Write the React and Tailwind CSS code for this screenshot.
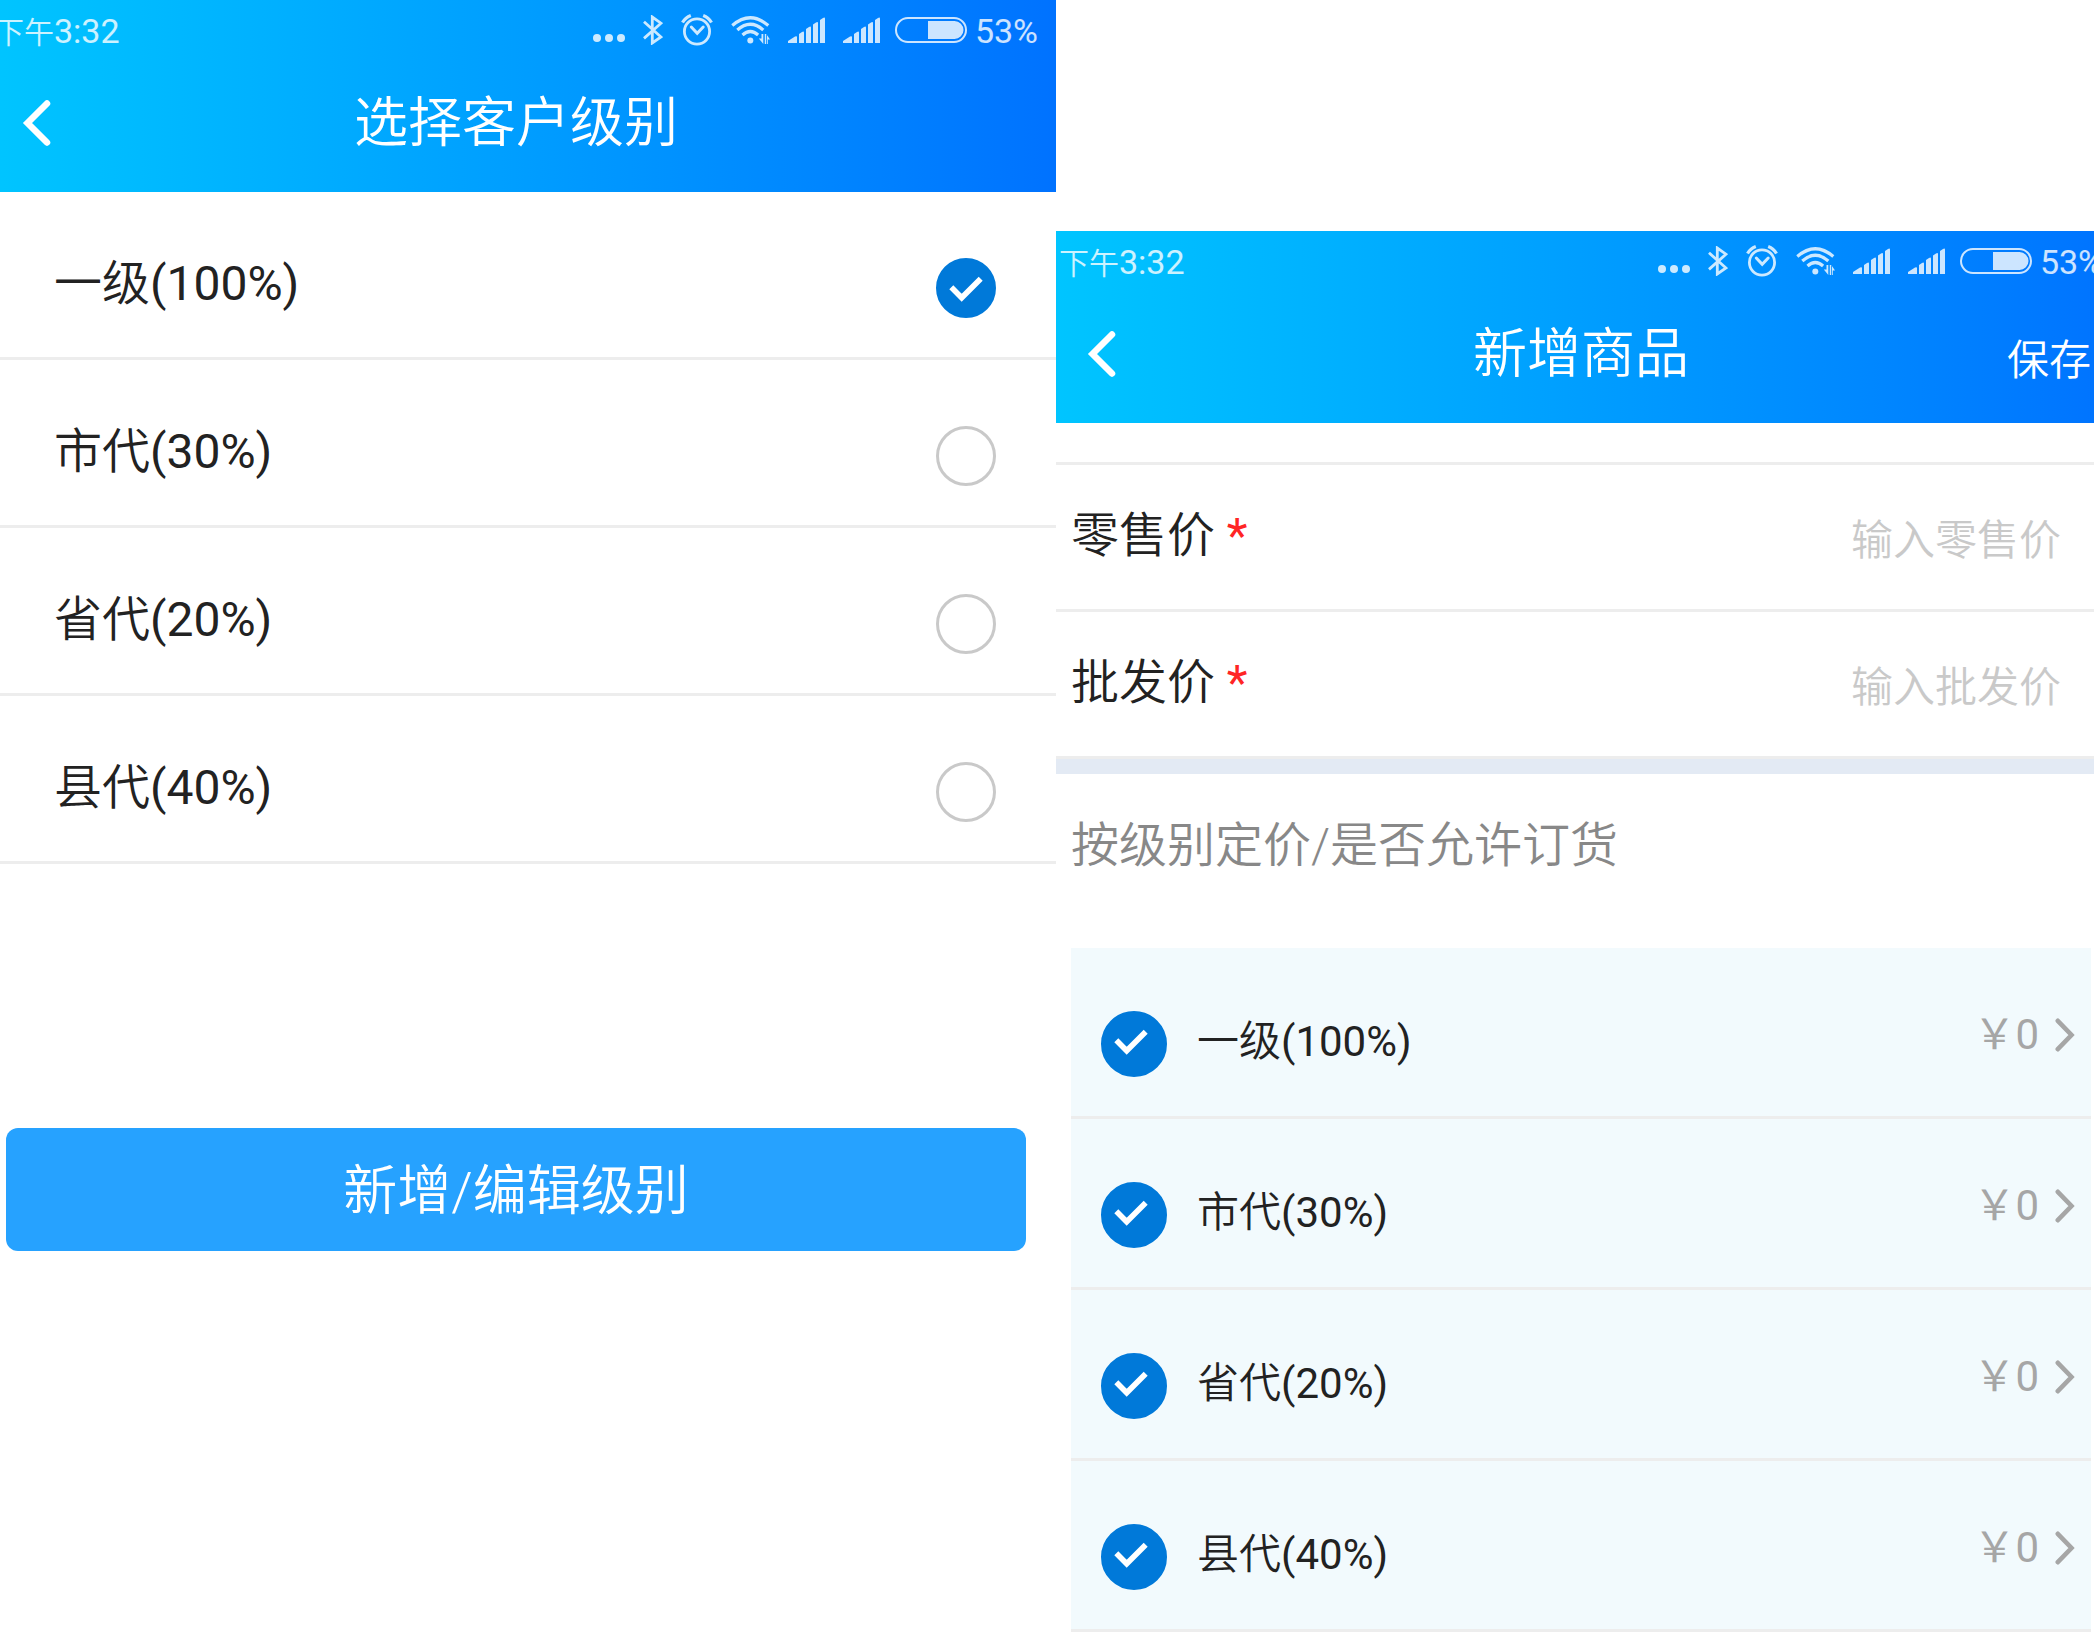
import { useState } from 'react'

const LEVELS = [
  { id: 'l1', name: '一级', rate: 100 },
  { id: 'city', name: '市代', rate: 30 },
  { id: 'province', name: '省代', rate: 20 },
  { id: 'county', name: '县代', rate: 40 },
]

const PRICE_FIELDS = [
  { id: 'retail', label: '零售价', placeholder: '输入零售价' },
  { id: 'wholesale', label: '批发价', placeholder: '输入批发价' },
]

function SignalIcon() {
  return (
    <svg width="37" height="26" viewBox="0 0 37 26" fill="currentColor">
      <path d="M0 26v-2l7-4.500q2-.8 2 .5v6z" />
      <path d="M11 26V17l3-2q2-1 2 .5V26z" />
      <path d="M18 26V12l3-2q2-1 2 .5V26z" />
      <path d="M25 26V7.500l3-2q2-1 2 .5V26z" />
      <path d="M32 26V3l3-2q2-1 2 .5V26z" />
    </svg>
  )
}

function StatusBar() {
  return (
    <div className="flex h-15 items-center gap-[18px] px-[18px] text-[34px] leading-none font-normal text-white/80">
      <span className="mr-auto pt-px">
        <span className="text-[30px] font-[350]">下午</span>3:32
      </span>
      <svg className="mt-4" width="32" height="10" viewBox="0 0 32 10" fill="currentColor">
        <circle cx="4" cy="5" r="4" />
        <circle cx="16" cy="5" r="4" />
        <circle cx="28" cy="5" r="4" />
      </svg>
      <svg width="20" height="30" viewBox="0 0 20 30" fill="none" stroke="currentColor" strokeWidth="2.8">
        <path d="M1 6.800 18 22 9.300 28V2L18 8.200 1 23.400" />
      </svg>
      <svg width="32" height="32" viewBox="0 0 32 32" fill="none" stroke="currentColor" strokeWidth="2.8">
        <circle cx="16" cy="17.500" r="12.600" />
        <path d="M10.300 13 16.200 19.300 22.200 13" strokeLinecap="round" strokeWidth="3" />
        <path d="M1.500 8.500Q4.500 3.500 9.800 1.500M30.500 8.500Q27.500 3.500 22.200 1.500" strokeWidth="3.2" />
      </svg>
      <svg width="39" height="28" viewBox="0 0 39 28" fill="none" stroke="currentColor" strokeWidth="3.2">
        <path d="M1.300 9.500Q19.300-6 37.300 9.500" />
        <path d="M6.300 14Q19.300 2.500 32.300 14" />
        <path d="M11.500 19Q19.300 12 27.100 19" />
        <circle cx="19.300" cy="24.500" r="3" fill="currentColor" stroke="none" />
        <path d="M30.500 18h1.800v10l-4.500-5.500h2.700zM33.800 28V18h1.500l3.700 5.500h-2.200V28h-1V18.500h-.8V28z" fill="currentColor" stroke="none" />
      </svg>
      <SignalIcon />
      <SignalIcon />
      <div className="-ml-[3px] flex items-center gap-2">
        <svg width="72" height="26" viewBox="0 0 72 26">
          <rect x="1" y="1" width="70" height="24" rx="12" fill="none" stroke="currentColor" strokeWidth="2" />
          <path d="M33 4h26.500a9 9 0 0 1 0 18H33z" fill="currentColor" />
        </svg>
        <span className="pt-px">53%</span>
      </div>
    </div>
  )
}

function Header({ title, action }) {
  return (
    <header className="h-48 bg-linear-to-r from-[#00c6ff] to-[#0072ff] text-white">
      <StatusBar />
      <div className="grid h-[123px] grid-cols-[1fr_auto_1fr] items-center px-[30px]">
        <button type="button" aria-label="返回" className="justify-self-start px-4 pt-0.5">
          <svg width="30" height="48" viewBox="0 0 30 48" fill="none" stroke="currentColor" strokeWidth="6.500" strokeLinecap="round">
            <path d="M25 4.500 5.500 24 25 43.500" />
          </svg>
        </button>
        <h1 className="pt-1 text-[54px] leading-none">{title}</h1>
        {action && (
          <button type="button" className="justify-self-end pt-4 text-[42px] leading-none">
            {action}
          </button>
        )}
      </div>
    </header>
  )
}

// the tick keeps one size whatever the size of the circle behind it
function Tick() {
  return (
    <svg
      className="pointer-events-none col-start-1 row-start-1 hidden text-white peer-checked:block"
      width="60"
      height="60"
      viewBox="0 0 60 60"
      fill="none"
      stroke="currentColor"
      strokeWidth="5.600"
    >
      <path d="M15.300 29.300 25.700 39.800 44.700 20.700" />
    </svg>
  )
}

function LevelName({ level }) {
  return (
    <>
      {level.name}
      <span className="font-normal">({level.rate}%)</span>
    </>
  )
}

function LevelPicker() {
  const [selected, setSelected] = useState('l1')

  return (
    <main>
      {LEVELS.map(level => (
        <label
          key={level.id}
          className="flex h-[168px] items-center justify-between border-b-3 border-[#ededed] pt-[27px] pr-[60px] pl-[78px]"
        >
          <span className="pb-2 text-[48px] leading-none">
            <LevelName level={level} />
          </span>
          <span className="grid">
            <input
              type="radio"
              name="level"
              checked={selected === level.id}
              onChange={() => setSelected(level.id)}
              className="peer col-start-1 row-start-1 size-15 appearance-none rounded-full border-3 border-[#c9c9c9] checked:border-[#0079d9] checked:bg-[#0079d9]"
            />
            <Tick />
          </span>
        </label>
      ))}
      <div className="px-[30px] pt-[264px]">
        <button type="button" className="h-[123px] w-full rounded-xl bg-[#26a2ff] pt-1 text-[54px] leading-none text-white">
          新增/编辑级别
        </button>
      </div>
    </main>
  )
}

function ProductForm() {
  const [allowed, setAllowed] = useState(LEVELS.map(level => level.id))

  const toggle = id =>
    setAllowed(list => (list.includes(id) ? list.filter(x => x !== id) : [...list, id]))

  return (
    <main>
      <div className="h-[42px] border-b-3 border-[#ededed]" />
      {PRICE_FIELDS.map(field => (
        <div key={field.id} className="flex h-[147px] items-center border-b-3 border-[#ededed] pr-[60px] pl-[30px]">
          <label htmlFor={field.id} className="shrink-0 pb-0.5 text-[48px] leading-none">
            {field.label} <span className="font-normal text-[#ff2525]">*</span>
          </label>
          <input
            id={field.id}
            type="text"
            placeholder={field.placeholder}
            className="h-16 min-w-0 flex-1 pt-1.5 text-right text-[42px] outline-none placeholder:text-[#c9c9c9]"
          />
        </div>
      ))}
      <div className="h-[15px] bg-[#e3eaf4]" />

      <h2 className="h-[174px] px-[30px] pt-12 text-[48px] leading-none text-[#888]">
        按级别定价/是否允许订货
      </h2>

      <ul className="mx-[30px] bg-[#f2fafd]">
        {LEVELS.map(level => (
          <li key={level.id} className="flex h-[171px] items-center justify-between border-b-3 border-[#ededed] pt-6 pr-4 pl-[30px]">
            <label className="flex items-center gap-[30px]">
              <span className="grid">
                <input
                  type="checkbox"
                  checked={allowed.includes(level.id)}
                  onChange={() => toggle(level.id)}
                  className="peer col-start-1 row-start-1 size-[66px] appearance-none rounded-full border-3 border-[#c9c9c9] checked:border-[#0079d9] checked:bg-[#0079d9]"
                />
                <Tick />
              </span>
              <span className="pb-1 text-[42px] leading-none">
                <LevelName level={level} />
              </span>
            </label>
            <button type="button" className="flex items-center gap-4 pb-[18px] text-[42px] leading-none font-normal text-[#a6a6a6]">
              <span>￥0</span>
              <svg width="20" height="34" viewBox="0 0 20 34" fill="none" stroke="currentColor" strokeWidth="4.600" strokeLinecap="round">
                <path d="M2.800 2.800 16.500 17 2.800 31.200" />
              </svg>
            </button>
          </li>
        ))}
      </ul>
    </main>
  )
}

export default function App() {
  return (
    <div className="grid min-h-screen grid-cols-[1056fr_1038fr] bg-white font-['Roboto','Noto_Sans_CJK_SC',sans-serif] font-[350] text-[#222]">
      <section className="min-w-0 overflow-hidden">
        <div className="-ml-6">
          <Header title="选择客户级别" />
          <LevelPicker />
        </div>
      </section>
      <section className="min-w-0 overflow-hidden pt-[231px]">
        <div className="-mr-[27px] -ml-[15px]">
          <Header title="新增商品" action="保存" />
          <ProductForm />
        </div>
      </section>
    </div>
  )
}
